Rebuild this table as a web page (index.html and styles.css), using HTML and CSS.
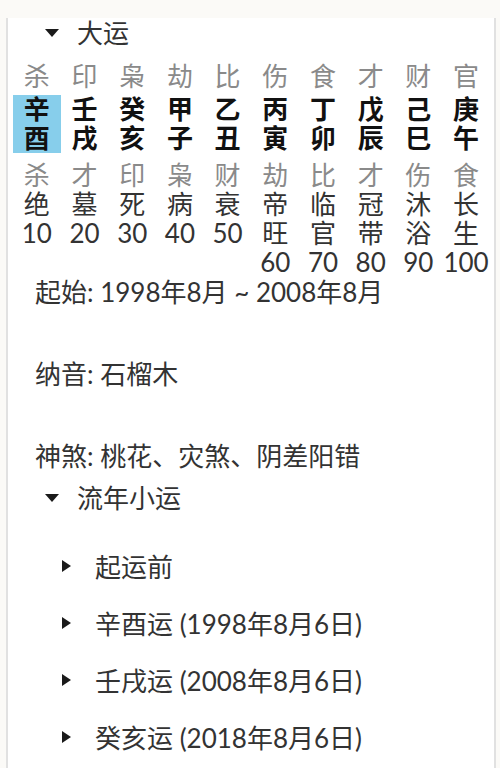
FILE: index.html
```html
<!DOCTYPE html>
<html lang="zh">
<head>
<meta charset="utf-8">
<title>大运</title>
<link rel="stylesheet" href="styles.css">
</head>
<body>
<div class="panel">
  <div class="summary open"><span class="tri-down"></span><span class="sum-text">大运</span></div>
  <div class="dayun">
    <div class="col"><div class="lbl">杀</div><div class="gz current">辛<br>酉</div><div class="lbl lbl2">杀</div><div class="cs">绝<br>10</div></div>
    <div class="col"><div class="lbl">印</div><div class="gz">壬<br>戌</div><div class="lbl lbl2">才</div><div class="cs">墓<br>20</div></div>
    <div class="col"><div class="lbl">枭</div><div class="gz">癸<br>亥</div><div class="lbl lbl2">印</div><div class="cs">死<br>30</div></div>
    <div class="col"><div class="lbl">劫</div><div class="gz">甲<br>子</div><div class="lbl lbl2">枭</div><div class="cs">病<br>40</div></div>
    <div class="col"><div class="lbl">比</div><div class="gz">乙<br>丑</div><div class="lbl lbl2">财</div><div class="cs">衰<br>50</div></div>
    <div class="col"><div class="lbl">伤</div><div class="gz">丙<br>寅</div><div class="lbl lbl2">劫</div><div class="cs">帝<br>旺<br>60</div></div>
    <div class="col"><div class="lbl">食</div><div class="gz">丁<br>卯</div><div class="lbl lbl2">比</div><div class="cs">临<br>官<br>70</div></div>
    <div class="col"><div class="lbl">才</div><div class="gz">戊<br>辰</div><div class="lbl lbl2">才</div><div class="cs">冠<br>带<br>80</div></div>
    <div class="col"><div class="lbl">财</div><div class="gz">己<br>巳</div><div class="lbl lbl2">伤</div><div class="cs">沐<br>浴<br>90</div></div>
    <div class="col"><div class="lbl">官</div><div class="gz">庚<br>午</div><div class="lbl lbl2">食</div><div class="cs">长<br>生<br>100</div></div>
  </div>
  <p class="info first">起始: 1998年8月 ~ 2008年8月</p>
  <p class="info">纳音: 石榴木</p>
  <p class="info">神煞: 桃花、灾煞、阴差阳错</p>
  <div class="summary open sub-head"><span class="tri-down"></span><span class="sum-text">流年小运</span></div>
  <ul class="years">
    <li class="summary closed"><span class="tri-right"></span><span class="sum-text2">起运前</span></li>
    <li class="summary closed"><span class="tri-right"></span><span class="sum-text2">辛酉运 (1998年8月6日)</span></li>
    <li class="summary closed"><span class="tri-right"></span><span class="sum-text2">壬戌运 (2008年8月6日)</span></li>
    <li class="summary closed"><span class="tri-right"></span><span class="sum-text2">癸亥运 (2018年8月6日)</span></li>
  </ul>
</div>
</body>
</html>
```
FILE: styles.css
```css
html, body {
  margin: 0;
  padding: 0;
}
body {
  background: #fbfaf7;
  font-family: Lato, "Noto Sans CJK SC", sans-serif;
  font-size: 26px;
  line-height: 29px;
  color: #333;
}
.panel {
  margin: 18px 0 0 6px;
  width: 490px;
  min-height: 760px;
  background: #fff;
  border-left: 2px solid #e1e1e1;
  border-right: 2px solid #e1e1e1;
  padding-top: 1px;
  box-sizing: border-box;
}
.summary {
  display: flex;
  align-items: center;
  height: 29px;
  white-space: nowrap;
}
.tri-down {
  margin-left: 37px;
  width: 0;
  height: 0;
  border-left: 7.5px solid transparent;
  border-right: 7.5px solid transparent;
  border-top: 8px solid #1a1a1a;
  margin-top: -2px;
}
.sum-text {
  margin-left: 18px;
}
.dayun {
  display: grid;
  grid-template-columns: repeat(10, 47.7px);
  margin: 14px 0 0 5px;
}
.col {
  display: flex;
  flex-direction: column;
  align-items: stretch;
  text-align: center;
}
.lbl {
  color: #8a8a8a;
}
.lbl2 {
  margin-top: 8px;
}
.gz {
  margin-top: 4px;
  height: 58px;
  font-weight: bold;
  color: #111;
}
.gz.current {
  background: #87ceeb;
}
.cs {
  color: #333;
}
.info {
  margin: 53px 0 0 27px;
  white-space: nowrap;
}
.info.first {
  margin-top: 1px;
}
.sub-head {
  margin-top: 13px;
}
.years {
  list-style: none;
  margin: 40px 0 0 0;
  padding: 0;
}
.years li + li {
  margin-top: 28px;
}
.tri-right {
  margin-left: 54px;
  width: 0;
  height: 0;
  border-top: 6.5px solid transparent;
  border-bottom: 6.5px solid transparent;
  border-left: 9px solid #1a1a1a;
  margin-top: -4px;
}
.sum-text2 {
  margin-left: 24px;
}
```
